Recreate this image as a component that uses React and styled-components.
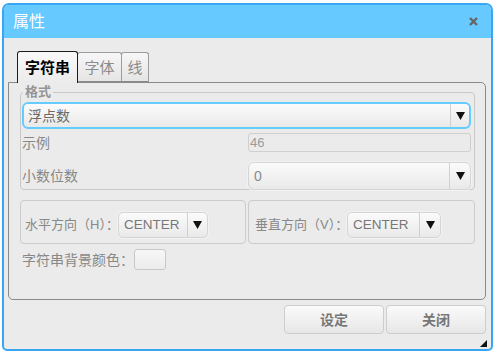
import React from 'react';
import styled, { createGlobalStyle } from 'styled-components';

const Global = createGlobalStyle`
  html, body { margin: 0; padding: 0; background: #ffffff; }
  body { font-family: "Liberation Sans", "Noto Sans CJK SC", sans-serif; }
  * { box-sizing: border-box; }
`;

const Window = styled.div`
  position: relative;
  margin: 3px 0 0 2px;
  width: 491px;
  height: 348px;
  border: 2px solid #38a6f3;
  border-radius: 7px 7px 5px 5px;
  background: #ebebeb;
  display: flex;
  flex-direction: column;
  overflow: hidden;
`;

const TitleBar = styled.div`
  flex: none;
  height: 33px;
  background: #66c9ff;
  display: flex;
  align-items: center;
  justify-content: space-between;
  padding: 0 13px 0 9px;
  color: #ffffff;
  font-size: 16px;
  line-height: 1;
`;

const CloseIcon = () => (
  <svg width="9" height="9" viewBox="0 0 9 9">
    <path d="M1 1 L8 8 M8 1 L1 8" stroke="#666" strokeWidth="2.4" strokeLinecap="butt" />
  </svg>
);

const Body = styled.div`
  flex: 1;
  display: flex;
  flex-direction: column;
  padding: 13px 5px 0 4px;
`;

const TabBar = styled.div`
  display: flex;
  align-items: flex-end;
  height: 31px;
  padding-left: 9px;
`;

const Tab = styled.div`
  position: relative;
  z-index: ${p => (p.$active ? 1 : 0)};
  width: ${p => p.$w}px;
  height: ${p => (p.$active ? 32 : 30)}px;
  margin-bottom: ${p => (p.$active ? -1 : 0)}px;
  margin-left: ${p => (p.$first ? 0 : -1)}px;
  border: 1px solid ${p => (p.$active ? '#1c1c1c' : '#9c9c9c')};
  border-bottom: ${p => (p.$active ? 'none' : '1px solid #8a8a8a')};
  border-radius: 3px 3px 0 0;
  background: ${p =>
    p.$active
      ? 'linear-gradient(#f9f9f9, #ebebeb)'
      : 'linear-gradient(#f7f7f7, #e5e5e5)'};
  display: flex;
  align-items: center;
  justify-content: center;
  font-size: 15px;
  line-height: 1;
  font-weight: ${p => (p.$active ? 700 : 400)};
  color: ${p => (p.$active ? '#000' : '#8c8c8c')};
`;

const Panel = styled.div`
  height: 218px;
  border: 1px solid #8a8a8a;
  border-radius: 0 5px 5px 5px;
  padding: 9px 10px 0 11px;
  display: flex;
  flex-direction: column;
`;

const Group = styled.div`
  position: relative;
  height: 98px;
  border: 1px solid #c9c9c9;
  border-radius: 4px;
  padding: 9px 3px 0 1px;
  display: flex;
  flex-direction: column;
`;

const Legend = styled.div`
  position: absolute;
  top: -8px;
  left: 2px;
  padding: 0 2px;
  background: #ebebeb;
  font-size: 13px;
  line-height: 14px;
  font-weight: 700;
  color: #959595;
`;

const Select = styled.div`
  height: ${p => p.$h}px;
  width: ${p => (p.$w ? `${p.$w}px` : 'auto')};
  flex: none;
  border: ${p => (p.$focus ? '2px solid #66ccff' : '1px solid #d5d5d5')};
  border-radius: ${p => p.$r || 6}px;
  background: linear-gradient(#fbfbfb, #e9e9e9);
  display: flex;
  align-items: stretch;
  overflow: hidden;
  box-shadow: ${p => (p.$focus ? 'none' : '0 0 0 1px #f2f2f2')};
`;

const SelectText = styled.div`
  flex: 1;
  display: flex;
  align-items: center;
  padding-left: ${p => p.$pl}px;
  font-size: ${p => p.$fs}px;
  line-height: 1;
  color: ${p => p.$c || '#777'};
  white-space: nowrap;
`;

const ArrowBox = styled.div`
  flex: none;
  width: ${p => p.$w}px;
  border-left: 1px solid #d0d0d0;
  display: flex;
  align-items: center;
  justify-content: center;
`;

const Arrow = () => (
  <svg width="9" height="8" viewBox="0 0 9 8">
    <polygon points="0,0 9,0 4.5,8" fill="#111" />
  </svg>
);

const Row = styled.div`
  display: grid;
  grid-template-columns: 226px 1fr;
  align-items: center;
  margin-top: ${p => p.$mt}px;
`;

const Label = styled.div`
  font-size: ${p => p.$fs || 14}px;
  line-height: 1;
  color: #888888;
  white-space: nowrap;
`;

const ReadOnlyBox = styled.div`
  height: 19px;
  border: 1px solid #cfcfcf;
  border-radius: 3px;
  background: #ebebeb;
  padding-left: 1px;
  display: flex;
  align-items: center;
  font-size: 13px;
  line-height: 1;
  color: #9a9a9a;
`;

const Split = styled.div`
  display: grid;
  grid-template-columns: 226px 227px;
  column-gap: 2px;
  margin-top: 10px;
`;

const Box = styled.div`
  height: 44px;
  border: 1px solid #cbcbcb;
  border-radius: 4px;
  display: flex;
  align-items: center;
  padding: 5px 0 0 ${p => p.$pl}px;
`;

const BoxLabel = styled.div`
  width: ${p => p.$w}px;
  flex: none;
  font-size: 13px;
  line-height: 1;
  color: #888888;
  white-space: nowrap;
`;

const ColorRow = styled.div`
  display: flex;
  align-items: center;
  margin-top: 5px;
  padding-left: 2px;
  height: 21px;
`;

const Swatch = styled.div`
  width: 32px;
  height: 21px;
  border: 1px solid #c8c8c8;
  border-radius: 3px;
  background: linear-gradient(#f7f7f7, #ececec);
`;

const ButtonRow = styled.div`
  display: flex;
  justify-content: flex-end;
  gap: 2px;
  margin-top: 5px;
`;

const Button = styled.div`
  width: 100px;
  height: 29px;
  border: 1px solid #cdcdcd;
  border-radius: 4px;
  background: linear-gradient(#fafafa, #e7e7e7);
  display: flex;
  align-items: center;
  justify-content: center;
  font-size: 14px;
  line-height: 1;
  font-weight: 700;
  color: #777;
`;

const Grip = styled.div`
  position: absolute;
  right: 4px;
  bottom: 2px;
  width: 7px;
  height: 7px;
  display: flex;
`;

export default function App() {
  return (
    <>
      <Global />
      <Window>
        <TitleBar>
          <span>属性</span>
          <CloseIcon />
        </TitleBar>
        <Body>
          <TabBar>
            <Tab $active $first $w={61}>字符串</Tab>
            <Tab $w={45}>字体</Tab>
            <Tab $w={28}>线</Tab>
          </TabBar>
          <Panel>
            <Group>
              <Legend>格式</Legend>
              <Select $h={27} $focus>
                <SelectText $pl={4} $fs={14} $c="#6a6a6a">浮点数</SelectText>
                <ArrowBox $w={19}><Arrow /></ArrowBox>
              </Select>
              <Row $mt={4}>
                <Label>示例</Label>
                <ReadOnlyBox>46</ReadOnlyBox>
              </Row>
              <Row $mt={10}>
                <Label>小数位数</Label>
                <Select $h={28}>
                  <SelectText $pl={5} $fs={14} $c="#8a8a8a">0</SelectText>
                  <ArrowBox $w={21}><Arrow /></ArrowBox>
                </Select>
              </Row>
            </Group>
            <Split>
              <Box $pl={4}>
                <BoxLabel $w={93}>水平方向（H）：</BoxLabel>
                <Select $h={26} $w={90} $r={5}>
                  <SelectText $pl={5} $fs={13.5} $c="#777">CENTER</SelectText>
                  <ArrowBox $w={20}><Arrow /></ArrowBox>
                </Select>
              </Box>
              <Box $pl={6}>
                <BoxLabel $w={92}>垂直方向（V）：</BoxLabel>
                <Select $h={26} $w={94} $r={5}>
                  <SelectText $pl={5} $fs={13.5} $c="#777">CENTER</SelectText>
                  <ArrowBox $w={21}><Arrow /></ArrowBox>
                </Select>
              </Box>
            </Split>
            <ColorRow>
              <Label>字符串背景颜色：</Label>
              <Swatch />
            </ColorRow>
          </Panel>
          <ButtonRow>
            <Button>设定</Button>
            <Button>关闭</Button>
          </ButtonRow>
        </Body>
        <Grip>
          <svg width="7" height="7" viewBox="0 0 7 7">
            <polygon points="7,0 7,7 0,7" fill="#111" />
          </svg>
        </Grip>
      </Window>
    </>
  );
}
